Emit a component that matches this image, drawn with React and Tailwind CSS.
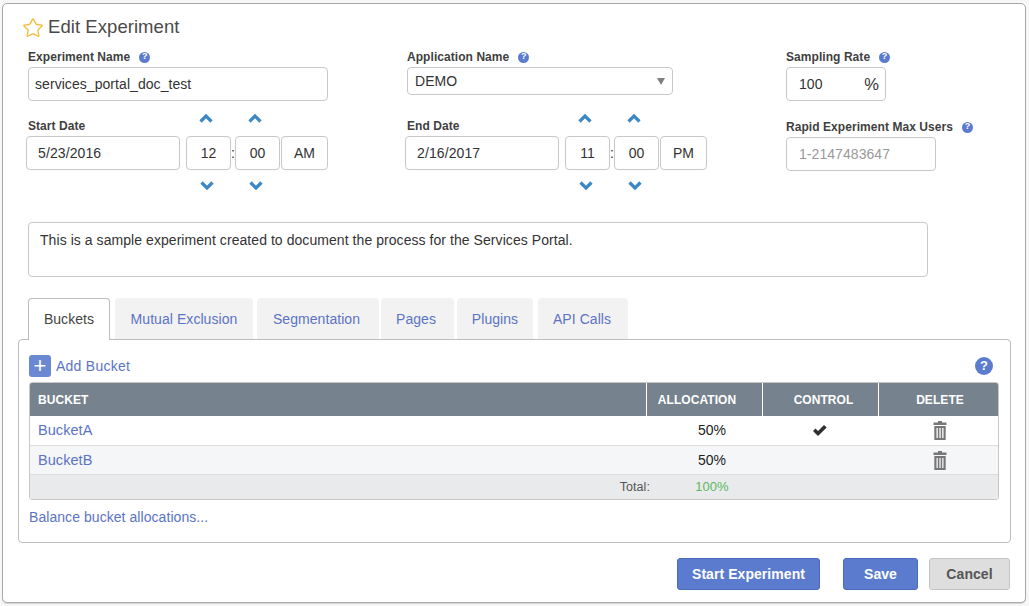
import { Star } from "lucide-react";

function Help({ big }) {
    return (
        <span
            className={
                big
                    ? "flex h-[18px] w-[18px] items-center justify-center rounded-full bg-[#5b7cce] text-[13px] font-bold text-white"
                    : "flex h-[11px] w-[11px] items-center justify-center rounded-full bg-[#5b7cce] text-[9px] font-bold text-white"
            }
        >
            ?
        </span>
    );
}

function Label({ text, className }) {
    return (
        <div className={"flex h-[14px] items-center gap-[9px] " + className}>
            <span className="text-[12px] font-bold text-[#3f3f3f]">{text}</span>
            <Help />
        </div>
    );
}

function Box({ className, children }) {
    return (
        <div
            className={
                "flex items-center rounded-[4px] border border-[#c8c8c8] bg-white text-[14px] text-[#333] " +
                className
            }
        >
            {children}
        </div>
    );
}

function Chevron({ up, className }) {
    return (
        <svg
            width="14"
            height="10"
            viewBox="0 0 14 10"
            fill="none"
            stroke="#3d87c9"
            strokeWidth="3.2"
            className={"absolute " + className}
        >
            <path d={up ? "M1.5 8.5L7 3l5.5 5.5" : "M1.5 1.5L7 7l5.5-5.5"} />
        </svg>
    );
}

function Spinner({ value }) {
    return (
        <div className="relative">
            <Chevron up className="left-[13px] top-[-23px]" />
            <Chevron className="left-[14px] top-[45px]" />
            <Box className="h-[34px] w-[45px] justify-center">{value}</Box>
        </div>
    );
}

function DateTime({ label, date, hour, minute, period }) {
    return (
        <div className="relative flex h-[34px] items-center">
            <span className="absolute left-[2px] top-[-19px] text-[12px] font-bold text-[#3f3f3f]">
                {label}
            </span>
            <Box className="h-[34px] w-[154px] pl-[11px] tracking-[0.1px]">{date}</Box>
            <div className="ml-[6px]">
                <Spinner value={hour} />
            </div>
            <span className="flex w-[4px] justify-center text-[14px] text-[#333]">:</span>
            <Spinner value={minute} />
            <Box className="ml-[1px] h-[34px] w-[47px] justify-center">{period}</Box>
        </div>
    );
}

function Trash() {
    return (
        <svg width="14" height="19" viewBox="0 0 14 19" fill="#777777">
            <path d="M5 0h4v1.5h4.5V4H.5V1.5H5z" />
            <path d="M1.3 5h11.4v14H1.3zM3.5 7v10h1.3V7zM6.4 7v10h1.3V7zM9.2 7v10h1.3V7z" fillRule="evenodd" />
        </svg>
    );
}

function Check() {
    return (
        <svg width="14" height="11" viewBox="0 0 14 11" fill="#2f2f2f">
            <path d="M0 6l2.5-2.5L5 6l6-6 2.7 2.6L5 11z" />
        </svg>
    );
}

const tabs = [
    ["Mutual Exclusion", "w-[138px] ml-[5px]"],
    ["Segmentation", "w-[122px] ml-[4px] pr-[3px]"],
    ["Pages", "w-[73px] ml-[2px] pr-[3px]"],
    ["Plugins", "w-[76px] ml-[3px]"],
    ["API Calls", "w-[90px] ml-[5px] pr-[2px]"],
];

const rows = [
    { name: "BucketA", control: true, bg: "bg-white", h: "h-[30px]" },
    { name: "BucketB", control: false, bg: "bg-[#f5f6f8]", h: "h-[29px]" },
];

const cols = "grid grid-cols-[616px_116px_116px_1fr]";

export default function App() {
    return (
        <div className="h-[606px] w-[1029px] bg-[#f7f7f7] pl-[2px] pt-[3px] font-['Liberation_Sans',Arial,sans-serif] tracking-[0.06px]">
            <div className="h-[600px] w-[1024px] rounded-[5px] border border-[#a9a9a9] bg-white pt-[12px] shadow-[0_1px_1px_rgba(0,0,0,0.15)]">
                <div className="flex h-[23px] items-center pl-[19px]">
                    <Star className="h-[22px] w-[22px] text-[#f5bd3c]" strokeWidth={1.5} />
                    <span className="ml-[4px] text-[18.5px] leading-none text-[#4a4a4a]">Edit Experiment</span>
                </div>

                <div className="mt-[11px] flex">
                    <div className="ml-[23px] w-[302px]">
                        <Label text="Experiment Name" className="pl-[2px]" />
                        <Box className="ml-[2px] mt-[3px] h-[34px] w-[300px] pl-[6px]">services_portal_doc_test</Box>
                        <div className="mt-[35px]">
                            <DateTime label="Start Date" date="5/23/2016" hour="12" minute="00" period="AM" />
                        </div>
                    </div>
                    <div className="ml-[77px] w-[302px]">
                        <Label text="Application Name" className="pl-[2px]" />
                        <Box className="ml-[2px] mt-[3px] h-[28px] w-[266px] justify-between px-[7px]">
                            <span>DEMO</span>
                            <span className="h-0 w-0 border-x-[4px] border-t-[7px] border-x-transparent border-t-[#808080]" />
                        </Box>
                        <div className="mt-[41px]">
                            <DateTime label="End Date" date="2/16/2017" hour="11" minute="00" period="PM" />
                        </div>
                    </div>
                    <div className="ml-[79px]">
                        <Label text="Sampling Rate" />
                        <Box className="mt-[3px] h-[34px] w-[100px] justify-between pl-[12px] pr-[6px]">
                            <span>100</span>
                            <span className="text-[16.5px]">%</span>
                        </Box>
                        <Label text="Rapid Experiment Max Users" className="mt-[19px]" />
                        <Box className="mt-[3px] h-[34px] w-[150px] pl-[12px]">
                            <span className="text-[#999]">1-2147483647</span>
                        </Box>
                    </div>
                </div>

                <div className="ml-[25px] mt-[51px] h-[55px] w-[900px] rounded-[4px] border border-[#c8c8c8] px-[11px] py-[8px] text-[14px] leading-[18px] text-[#333]">
                    This is a sample experiment created to document the process for the Services Portal.
                </div>

                <div className="ml-[25px] mt-[21px] flex h-[42px]">
                    <div className="relative z-10 flex h-[42px] w-[82px] items-center justify-center rounded-t-[4px] border border-b-0 border-[#bdbdbd] bg-white text-[14px] text-[#444]">
                        Buckets
                    </div>
                    {tabs.map(([name, size]) => (
                        <div
                            key={name}
                            className={"flex h-[41px] items-center justify-center rounded-t-[4px] bg-[#f2f2f2] pt-[2px] text-[14px] text-[#5b74c4] " + size}
                        >
                            {name}
                        </div>
                    ))}
                </div>

                <div className="ml-[15px] mt-[-1px] h-[204px] w-[993px] rounded-[4px] border border-[#bdbdbd] px-[10px] pt-[15px]">
                    <div className="flex h-[22px] items-center justify-between pr-[7px]">
                        <div className="flex items-center gap-[5px]">
                            <span className="flex h-[22px] w-[22px] items-center justify-center rounded-[3px] bg-[#6b88d3] text-[22px] font-normal leading-none text-white">
                                +
                            </span>
                            <span className="text-[14px] tracking-[0.25px] text-[#5b74c4]">Add Bucket</span>
                        </div>
                        <Help big />
                    </div>

                    <div className="mt-[5px] w-[970px] overflow-hidden rounded-[3px] border border-[#c8c8c8]">
                        <div className={cols + " h-[33px] bg-[#76828e] text-[12px] font-bold text-white"}>
                            <div className="flex items-center pl-[8px]">BUCKET</div>
                            <div className="flex items-center justify-center border-l border-white pr-[15px]">ALLOCATION</div>
                            <div className="flex items-center justify-center border-l border-white pl-[6px]">CONTROL</div>
                            <div className="flex items-center justify-center border-l border-white pl-[3px]">DELETE</div>
                        </div>
                        {rows.map((r) => (
                            <div key={r.name} className={cols + " border-b border-[#dcdcdc] text-[14px] text-[#222] " + r.h + " " + r.bg}>
                                <div className="flex items-center pl-[8px] pt-[1px] text-[14.5px] text-[#5b74c4]">{r.name}</div>
                                <div className="flex items-center justify-center pl-[16px]">50%</div>
                                <div className="flex items-center justify-center">
                                    {r.control && <Check />}
                                </div>
                                <div className="flex items-center justify-center pl-[4px]">
                                    <Trash />
                                </div>
                            </div>
                        ))}
                        <div className={cols + " h-[24px] bg-[#e8eaec] text-[12.5px]"}>
                            <div className="mr-[-4px] flex items-center justify-end text-[#555]">Total:</div>
                            <div className="flex items-center justify-center pl-[16px] text-[13px] text-[#5cb85c]">100%</div>
                        </div>
                    </div>

                    <div className="mt-[7px] text-[14px] text-[#5b74c4]">Balance bucket allocations...</div>
                </div>

                <div className="mt-[15px] flex justify-end gap-[11px] pr-[15px]">
                    <div className="mr-[12px] flex h-[32px] w-[143px] items-center justify-center rounded-[3px] border border-[#4a6bb8] bg-[#5b7cce] text-[14px] font-bold text-white">
                        Start Experiment
                    </div>
                    <div className="flex h-[32px] w-[75px] items-center justify-center rounded-[3px] border border-[#4a6bb8] bg-[#5b7cce] text-[14px] font-bold text-white">
                        Save
                    </div>
                    <div className="flex h-[32px] w-[81px] items-center justify-center rounded-[3px] border border-[#c4c4c4] bg-[#dedede] text-[14px] font-bold text-[#555]">
                        Cancel
                    </div>
                </div>
            </div>
        </div>
    );
}
